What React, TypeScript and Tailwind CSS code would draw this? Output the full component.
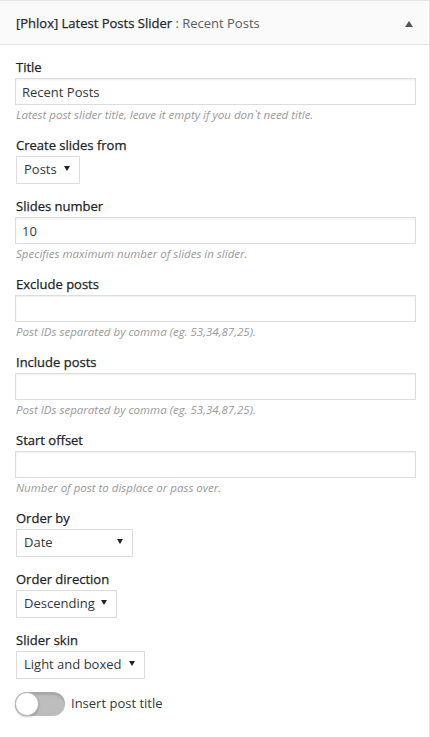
import React from "react";

const Label = ({ children }: { children: React.ReactNode }) => (
  <div className="mb-[2px] text-[13px] leading-[18px] text-[#1d2327] [-webkit-text-stroke:0.25px_#1d2327]">{children}</div>
);

const Hint = ({ children }: { children: React.ReactNode }) => (
  <p className="mt-[1px] text-[11.5px] leading-[18px] italic text-[#999]">{children}</p>
);

const TextField = ({ label, value, hint }: { label: string; value?: string; hint: string }) => (
  <div className="mb-3">
    <Label>{label}</Label>
    <input
      readOnly
      value={value ?? ""}
      className="-ml-px block h-[27px] w-[401px] border border-[#ddd] bg-white px-[6px] text-[13px] text-[#32373c] shadow-[inset_0_1px_2px_rgba(0,0,0,0.07)] outline-none"
    />
    <Hint>{hint}</Hint>
  </div>
);

const SelectField = ({ label, value, width }: { label: string; value: string; width: string }) => (
  <div className="mb-[13px]">
    <Label>{label}</Label>
    <div className={`flex h-[28px] items-center justify-between border border-[#ddd] bg-white pl-[7px] pr-[9px] text-[13px] text-[#32373c] ${width}`}>
      <span>{value}</span>
      <svg width="6" height="5" viewBox="0 0 6 5" className="mb-[3px]">
        <path d="M0 0h6L3 5z" fill="#222" />
      </svg>
    </div>
  </div>
);

export default function App() {
  return (
    <div className="min-h-screen bg-white font-['Open_Sans','Noto_Sans',sans-serif]">
      <div className="w-[430px] border-t border-r border-[#e5e5e5]">
        <div className="flex h-[44px] items-center justify-between border-b border-[#e5e5e5] bg-[#fafafa] pl-4 pr-4 pt-[2px]">
          <h3 className="text-[13px] text-[#23282d]">
            <span className="[-webkit-text-stroke:0.25px_#23282d]">[Phlox] Latest Posts Slider</span>
            <span className="text-[#555d66]"> : Recent Posts</span>
          </h3>
          <svg width="8" height="6" viewBox="0 0 8 6">
            <path d="M0 6L4 0l4 6z" fill="#555" />
          </svg>
        </div>

        <div className="pl-4 pt-[13px]">
          <TextField label="Title" value="Recent Posts" hint="Latest post slider title, leave it empty if you don`t need title." />
          <SelectField label="Create slides from" value="Posts" width="w-[64px]" />
          <TextField label="Slides number" value="10" hint="Specifies maximum number of slides in slider." />
          <TextField label="Exclude posts" hint="Post IDs separated by comma (eg. 53,34,87,25)." />
          <TextField label="Include posts" hint="Post IDs separated by comma (eg. 53,34,87,25)." />
          <TextField label="Start offset" hint="Number of post to displace or pass over." />
          <SelectField label="Order by" value="Date" width="w-[117px]" />
          <SelectField label="Order direction" value="Descending" width="w-[101px]" />
          <SelectField label="Slider skin" value="Light and boxed" width="w-[129px]" />

          <div className="mt-[4px] -ml-px flex items-center gap-[6px]">
            <div className="relative h-[24px] w-[50px] rounded-full bg-[#bdbdbd] shadow-[inset_0_3px_2px_rgba(0,0,0,0.12)]">
              <div className="absolute left-0 top-0 h-[24px] w-[24px] rounded-full border border-[#b5b5b5] bg-white shadow-[0_1px_2px_rgba(0,0,0,0.25)]" />
            </div>
            <span className="text-[13px] text-[#32373c]">Insert post title</span>
          </div>

          <div className="mt-[16px]">
            <Label>Insert post meta</Label>
          </div>
        </div>
      </div>
    </div>
  );
}
